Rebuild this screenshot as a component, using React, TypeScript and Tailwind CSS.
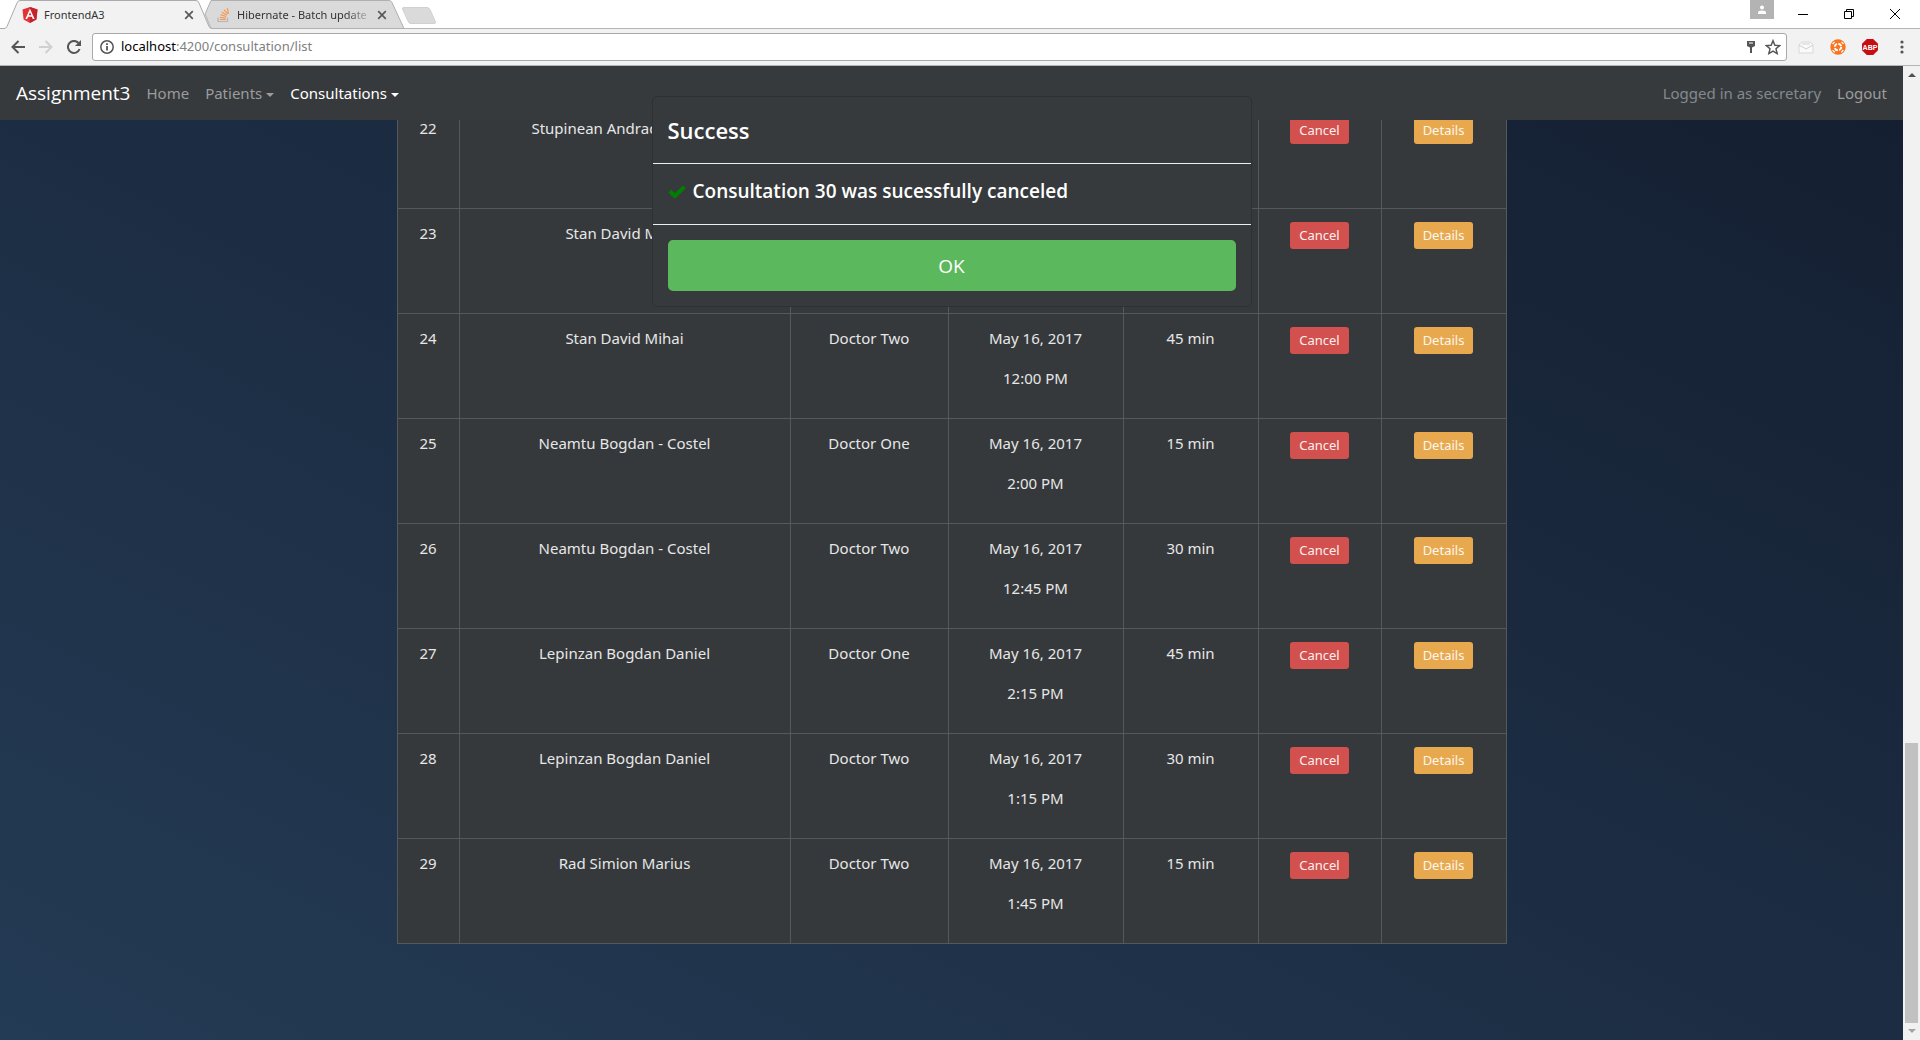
import React from "react";

type Row = { id: number; patient: string; doctor: string; time: string; duration: string };

const rows: Row[] = [
  { id: 22, patient: "Stupinean Andrada Bianca", doctor: "Doctor One", time: "12:00 PM", duration: "30 min" },
  { id: 23, patient: "Stan David Mihai", doctor: "Doctor One", time: "12:30 PM", duration: "30 min" },
  { id: 24, patient: "Stan David Mihai", doctor: "Doctor Two", time: "12:00 PM", duration: "45 min" },
  { id: 25, patient: "Neamtu Bogdan - Costel", doctor: "Doctor One", time: "2:00 PM", duration: "15 min" },
  { id: 26, patient: "Neamtu Bogdan - Costel", doctor: "Doctor Two", time: "12:45 PM", duration: "30 min" },
  { id: 27, patient: "Lepinzan Bogdan Daniel", doctor: "Doctor One", time: "2:15 PM", duration: "45 min" },
  { id: 28, patient: "Lepinzan Bogdan Daniel", doctor: "Doctor Two", time: "1:15 PM", duration: "30 min" },
  { id: 29, patient: "Rad Simion Marius", doctor: "Doctor Two", time: "1:45 PM", duration: "15 min" },
];

function CloseX() {
  return (
    <svg viewBox="0 0 10 10" className="size-[10px]" aria-hidden="true">
      <path d="M1.2 1.2l7.6 7.6M8.800 1.200L1.200 8.800" stroke="#5a5a5a" strokeWidth="1.700" />
    </svg>
  );
}

function TabStrip() {
  return (
    <div className="relative flex h-7 shrink-0 bg-white text-[11px] text-[#333]">
      <svg className="absolute left-0 top-0 z-10 h-[29px] w-[440px]" viewBox="0 0 440 29" aria-hidden="true">
        <path d="M205 14L211 0.500H389Q391 0.500 392 2.500L404 28.500H211Z" fill="#dadada" stroke="#b0b0b0" />
        <path d="M404 7.500H427Q429 7.500 430 9.500L435.500 22Q436 23.500 434 23.500H411Q409 23.500 408.500 22L402.500 9Q402 7.500 404 7.500Z" fill="#dadada" stroke="#d0d0d0" />
        <path d="M0 29V28.500H4Q6 28.500 7 26.500L17 3Q18 0.500 20 0.500H196Q198 0.500 199 3L209 26.500Q210 28.500 212 28.500V29Z" fill="#f2f2f2" />
        <path d="M0 28.500H4Q6 28.500 7 26.500L17 3Q18 0.500 20 0.500H196Q198 0.500 199 3L209 26.500Q210 28.500 212 28.500" fill="none" stroke="#aaa" />
      </svg>
      <div className="relative z-10 flex w-[208px] items-center pl-[22px] pr-[14px] pt-0.5">
        <svg viewBox="0 0 16 16" className="size-4 shrink-0" aria-hidden="true">
          <path d="M8 0l7.500 2.600-1.100 9.900L8 16l-6.400-3.500L.5 2.600z" fill="#e23237" />
          <path d="M8 0l7.500 2.600-1.100 9.900L8 16z" fill="#c4232c" />
          <path d="M8 1.800L3.400 12h1.700l1-2.300h3.800l.9 2.300h1.800zM8 5.200l1.300 3.100H6.700z" fill="#fff" fillRule="evenodd" />
        </svg>
        <span className="grow pl-1.5">FrontendA3</span>
        <button aria-label="Close FrontendA3"><CloseX /></button>
      </div>
      <div className="relative z-10 flex w-[196px] items-center pl-2 pr-[17px] pt-0.5">
        <svg viewBox="0 0 16 16" className="size-4 shrink-0" aria-hidden="true">
          <path d="M2 10.500v4h9.500v-4" fill="none" stroke="#b5b5b5" strokeWidth="1.200" />
          <path d="M3.800 12.500h6M3.800 10.300l6 .8M4.500 7.600l5.700 1.900M5.800 5l5 3.200M8 2.600l3.800 4.600M11.200 1l1.400 5.600" stroke="#f69a55" strokeWidth="1.200" />
        </svg>
        <span className="ml-[5px] w-[136px] whitespace-nowrap mask-r-from-80%">Hibernate - Batch update</span>
        <button aria-label="Close Hibernate" className="ml-auto"><CloseX /></button>
      </div>
      <div className="relative ml-auto flex items-start">
        <button aria-label="Profile" className="grid h-[19px] w-6 place-items-center bg-[#b3b3b3]">
          <svg viewBox="0 0 10 10" className="size-[10px]" aria-hidden="true">
            <circle cx="5" cy="2.500" r="2" fill="#fff" />
            <path d="M1 9V7.500Q1 5.500 5 5.500T9 7.500V9z" fill="#fff" />
          </svg>
        </button>
        <button aria-label="Minimize" className="grid h-[27px] w-[46px] place-items-center pl-3">
          <svg viewBox="0 0 10 10" className="size-[10px]" aria-hidden="true"><path d="M0 5.500H10" stroke="#000" /></svg>
        </button>
        <button aria-label="Restore" className="grid h-[27px] w-[46px] place-items-center pl-3">
          <svg viewBox="0 0 10 10" className="size-[10px]" aria-hidden="true"><path d="M.5 2.500H7.500V9.500H.5ZM2.500 2.500V.5H9.500V7.500H7.500" fill="none" stroke="#000" /></svg>
        </button>
        <button aria-label="Close window" className="grid h-[27px] w-[46px] place-items-center pl-3">
          <svg viewBox="0 0 10 10" className="size-[10px]" aria-hidden="true"><path d="M0 0L10 10M10 0L0 10" stroke="#000" /></svg>
        </button>
        <div className="w-2" />
      </div>
    </div>
  );
}

function Toolbar() {
  return (
    <div className="flex h-[38px] shrink-0 items-center border-y border-[#b4b4b4] bg-[#f2f2f2]">
      <button aria-label="Back" className="ml-[11px]">
        <svg viewBox="0 0 14 14" className="size-[14px]" aria-hidden="true"><path d="M14 7H1.500M7.500 1L1.500 7l6 6" fill="none" stroke="#555" strokeWidth="2" /></svg>
      </button>
      <button aria-label="Forward" className="ml-[14px]">
        <svg viewBox="0 0 14 14" className="size-[14px]" aria-hidden="true"><path d="M0 7H12.500M6.500 1l6 6-6 6" fill="none" stroke="#d0d0d0" strokeWidth="2" /></svg>
      </button>
      <button aria-label="Reload" className="ml-[14px]">
        <svg viewBox="0 0 14 14" className="size-[14px]" aria-hidden="true"><path d="M12.600 9A6 6 0 1 1 11.500 3" fill="none" stroke="#555" strokeWidth="2" /><path d="M14 0V6H8z" fill="#555" /></svg>
      </button>
      <div className="ml-[11px] flex h-7 grow items-center rounded-[3px] border border-[#a9a9a9] bg-white pl-[7px] pr-[5px] text-[13px]">
        <svg viewBox="0 0 14 14" className="size-[14px]" aria-hidden="true"><circle cx="7" cy="7" r="6.200" fill="none" stroke="#555" strokeWidth="1.500" /><path d="M7 6v4.500M7 3.300v1.700" stroke="#555" strokeWidth="1.800" /></svg>
        <div className="grow pl-[7px]"><span className="text-black">localhost</span><span className="text-[#808080]">:4200/consultation/list</span></div>
        <svg viewBox="0 0 8 12" className="h-3 w-2" aria-hidden="true"><path d="M0 0H8V5L5 6.500V12H3V6.500L0 5Z" fill="#555" /><path d="M2 2h4" stroke="#fff" /></svg>
        <svg viewBox="0 0 24 24" className="ml-2.5 size-4" aria-hidden="true"><path d="M12 2.500l2.800 6.800 7.200.6-5.500 4.800 1.700 7.100L12 18l-6.200 3.800 1.700-7.100L2 9.900l7.200-.6z" fill="none" stroke="#555" strokeWidth="2.200" /></svg>
      </div>
      <button aria-label="Mail checker" className="ml-[11px]">
        <svg viewBox="0 0 16 16" className="size-4" aria-hidden="true">
          <path d="M1 5.500L4 3h8l3 2.500V14H1z" fill="#fafafa" stroke="#d8d8d8" />
          <path d="M1 6l7 4 7-4M4 5h8" fill="none" stroke="#cfcfcf" />
        </svg>
      </button>
      <button aria-label="Extension" className="ml-4">
        <svg viewBox="0 0 16 16" className="size-4" aria-hidden="true">
          <circle cx="8" cy="8" r="7.700" fill="#f8741f" />
          <circle cx="8" cy="8" r="3.300" fill="none" stroke="#fff" strokeWidth="2" strokeDasharray="3.800 1.380" />
          <path d="M2.500 5l2-2M11.500 2.800l2 2.200M13.300 11l-2 2.300M4.800 13.300l-2.200-2" stroke="#fff" strokeWidth="1.200" />
        </svg>
      </button>
      <button aria-label="Adblock Plus" className="ml-4 grid size-4 place-items-center bg-[#c70d12] font-['Liberation_Sans',sans-serif] text-[7px] font-bold leading-none text-white [clip-path:polygon(30%_0,70%_0,100%_30%,100%_70%,70%_100%,30%_100%,0_70%,0_30%)]">
        ABP
      </button>
      <button aria-label="Menu" className="ml-[22px] mr-4">
        <svg viewBox="0 0 4 14" className="h-[14px] w-1" aria-hidden="true"><circle cx="2" cy="2" r="1.600" fill="#555" /><circle cx="2" cy="7" r="1.600" fill="#555" /><circle cx="2" cy="12" r="1.600" fill="#555" /></svg>
      </button>
    </div>
  );
}

function Caret() {
  return (
    <svg viewBox="0 0 8 4" className="ml-1 mt-1 h-1 w-2" aria-hidden="true"><path d="M0 0H8L4 4z" fill="currentColor" /></svg>
  );
}

function Navbar() {
  return (
    <nav className="absolute inset-x-0 top-0 z-10 flex h-[54px] items-center bg-[#373a3c] px-4 text-[15px] text-[#9b9c9d]">
      <a href="#home" className="mr-4 font-['Open_Sans',sans-serif] text-[19px] text-white">Assignment3</a>
      <a href="#home" className="mr-4">Home</a>
      <button className="mr-4 flex items-center">Patients<Caret /></button>
      <button className="flex items-center text-white">Consultations<Caret /></button>
      <span className="ml-auto mr-4 text-[#818a91]">Logged in as secretary</span>
      <a href="#logout">Logout</a>
    </nav>
  );
}

function ConsultationTable() {
  return (
    <table className="mx-auto mt-[37px] w-[1110px] max-w-full table-fixed border-collapse bg-[#36393b] text-center text-[15px] leading-6 text-[#e6e7e7] [&_td]:border [&_td]:border-[#56595b] [&_td]:p-3 [&_td]:align-top">
      <colgroup>
        <col className="w-[62px]" />
        <col />
        <col className="w-[158px]" />
        <col className="w-[175px]" />
        <col className="w-[135px]" />
        <col className="w-[123px]" />
        <col className="w-[125px]" />
      </colgroup>
      <tbody>
        {rows.map((r) => (
          <tr key={r.id}>
            <td>{r.id}</td>
            <td>{r.patient}</td>
            <td>{r.doctor}</td>
            <td>
              <p className="mb-4">May 16, 2017</p>
              <p className="mb-4">{r.time}</p>
            </td>
            <td>{r.duration}</td>
            <td>
              <button className="mt-px h-[27px] w-[59px] rounded-[3px] bg-[#d2504d] text-[13px] leading-[27px] text-[#f8f0f0]">Cancel</button>
            </td>
            <td>
              <button className="mt-px h-[27px] w-[59px] rounded-[3px] bg-[#e8a94e] text-[13px] leading-[27px] text-[#fbf6ee]">Details</button>
            </td>
          </tr>
        ))}
      </tbody>
    </table>
  );
}

function SuccessDialog() {
  return (
    <div className="absolute inset-x-0 top-[30px] z-20 flex justify-center">
      <div role="dialog" aria-labelledby="dialog-title" className="w-[600px] rounded-[5px] border border-[#2e3133] bg-[#373a3c] font-['Open_Sans',sans-serif] text-white">
        <h4 id="dialog-title" className="border-b border-[#eceeef] px-[15px] py-[15px] text-[22px] font-semibold leading-9">Success</h4>
        <p className="flex items-center border-b border-[#eceeef] px-[15px] pb-5 pt-[15px] text-[19px] font-semibold leading-[25px]">
          <svg viewBox="0 0 18 14" className="mr-[7px] h-[14px] w-[18px]" aria-hidden="true"><path d="M0.500 7.500L3.200 4.800L7 8.300L15 0.400L17.800 3.200L7 13.800Z" fill="#008000" /></svg>
          Consultation 30 was sucessfully canceled
        </p>
        <div className="p-[15px]">
          <button className="block h-[51px] w-full rounded-[5px] bg-[#5cb85c] pt-0.5 text-[19px]">OK</button>
        </div>
      </div>
    </div>
  );
}

function Scrollbar() {
  return (
    <div className="flex w-[17px] shrink-0 flex-col items-center bg-[#f1f1f1]">
      <svg viewBox="0 0 8 4" className="mt-[7px] h-1 w-2" aria-hidden="true"><path d="M0 4H8L4 0z" fill="#505050" /></svg>
      <div className="mt-auto h-[280px] w-[13px] bg-[#c1c1c1]" />
      <svg viewBox="0 0 8 4" className="mb-[7px] mt-1.5 h-1 w-2" aria-hidden="true"><path d="M0 0H8L4 4z" fill="#a3a3a3" /></svg>
    </div>
  );
}

export default function App() {
  return (
    <div className="flex h-screen flex-col overflow-hidden font-['Noto_Sans',sans-serif]">
      <TabStrip />
      <Toolbar />
      <div className="flex min-h-0 grow">
        <main className="relative min-w-0 grow overflow-hidden bg-[linear-gradient(to_top_right,#243b55,#141e30)]">
          <Navbar />
          <ConsultationTable />
          <SuccessDialog />
        </main>
        <Scrollbar />
      </div>
    </div>
  );
}
